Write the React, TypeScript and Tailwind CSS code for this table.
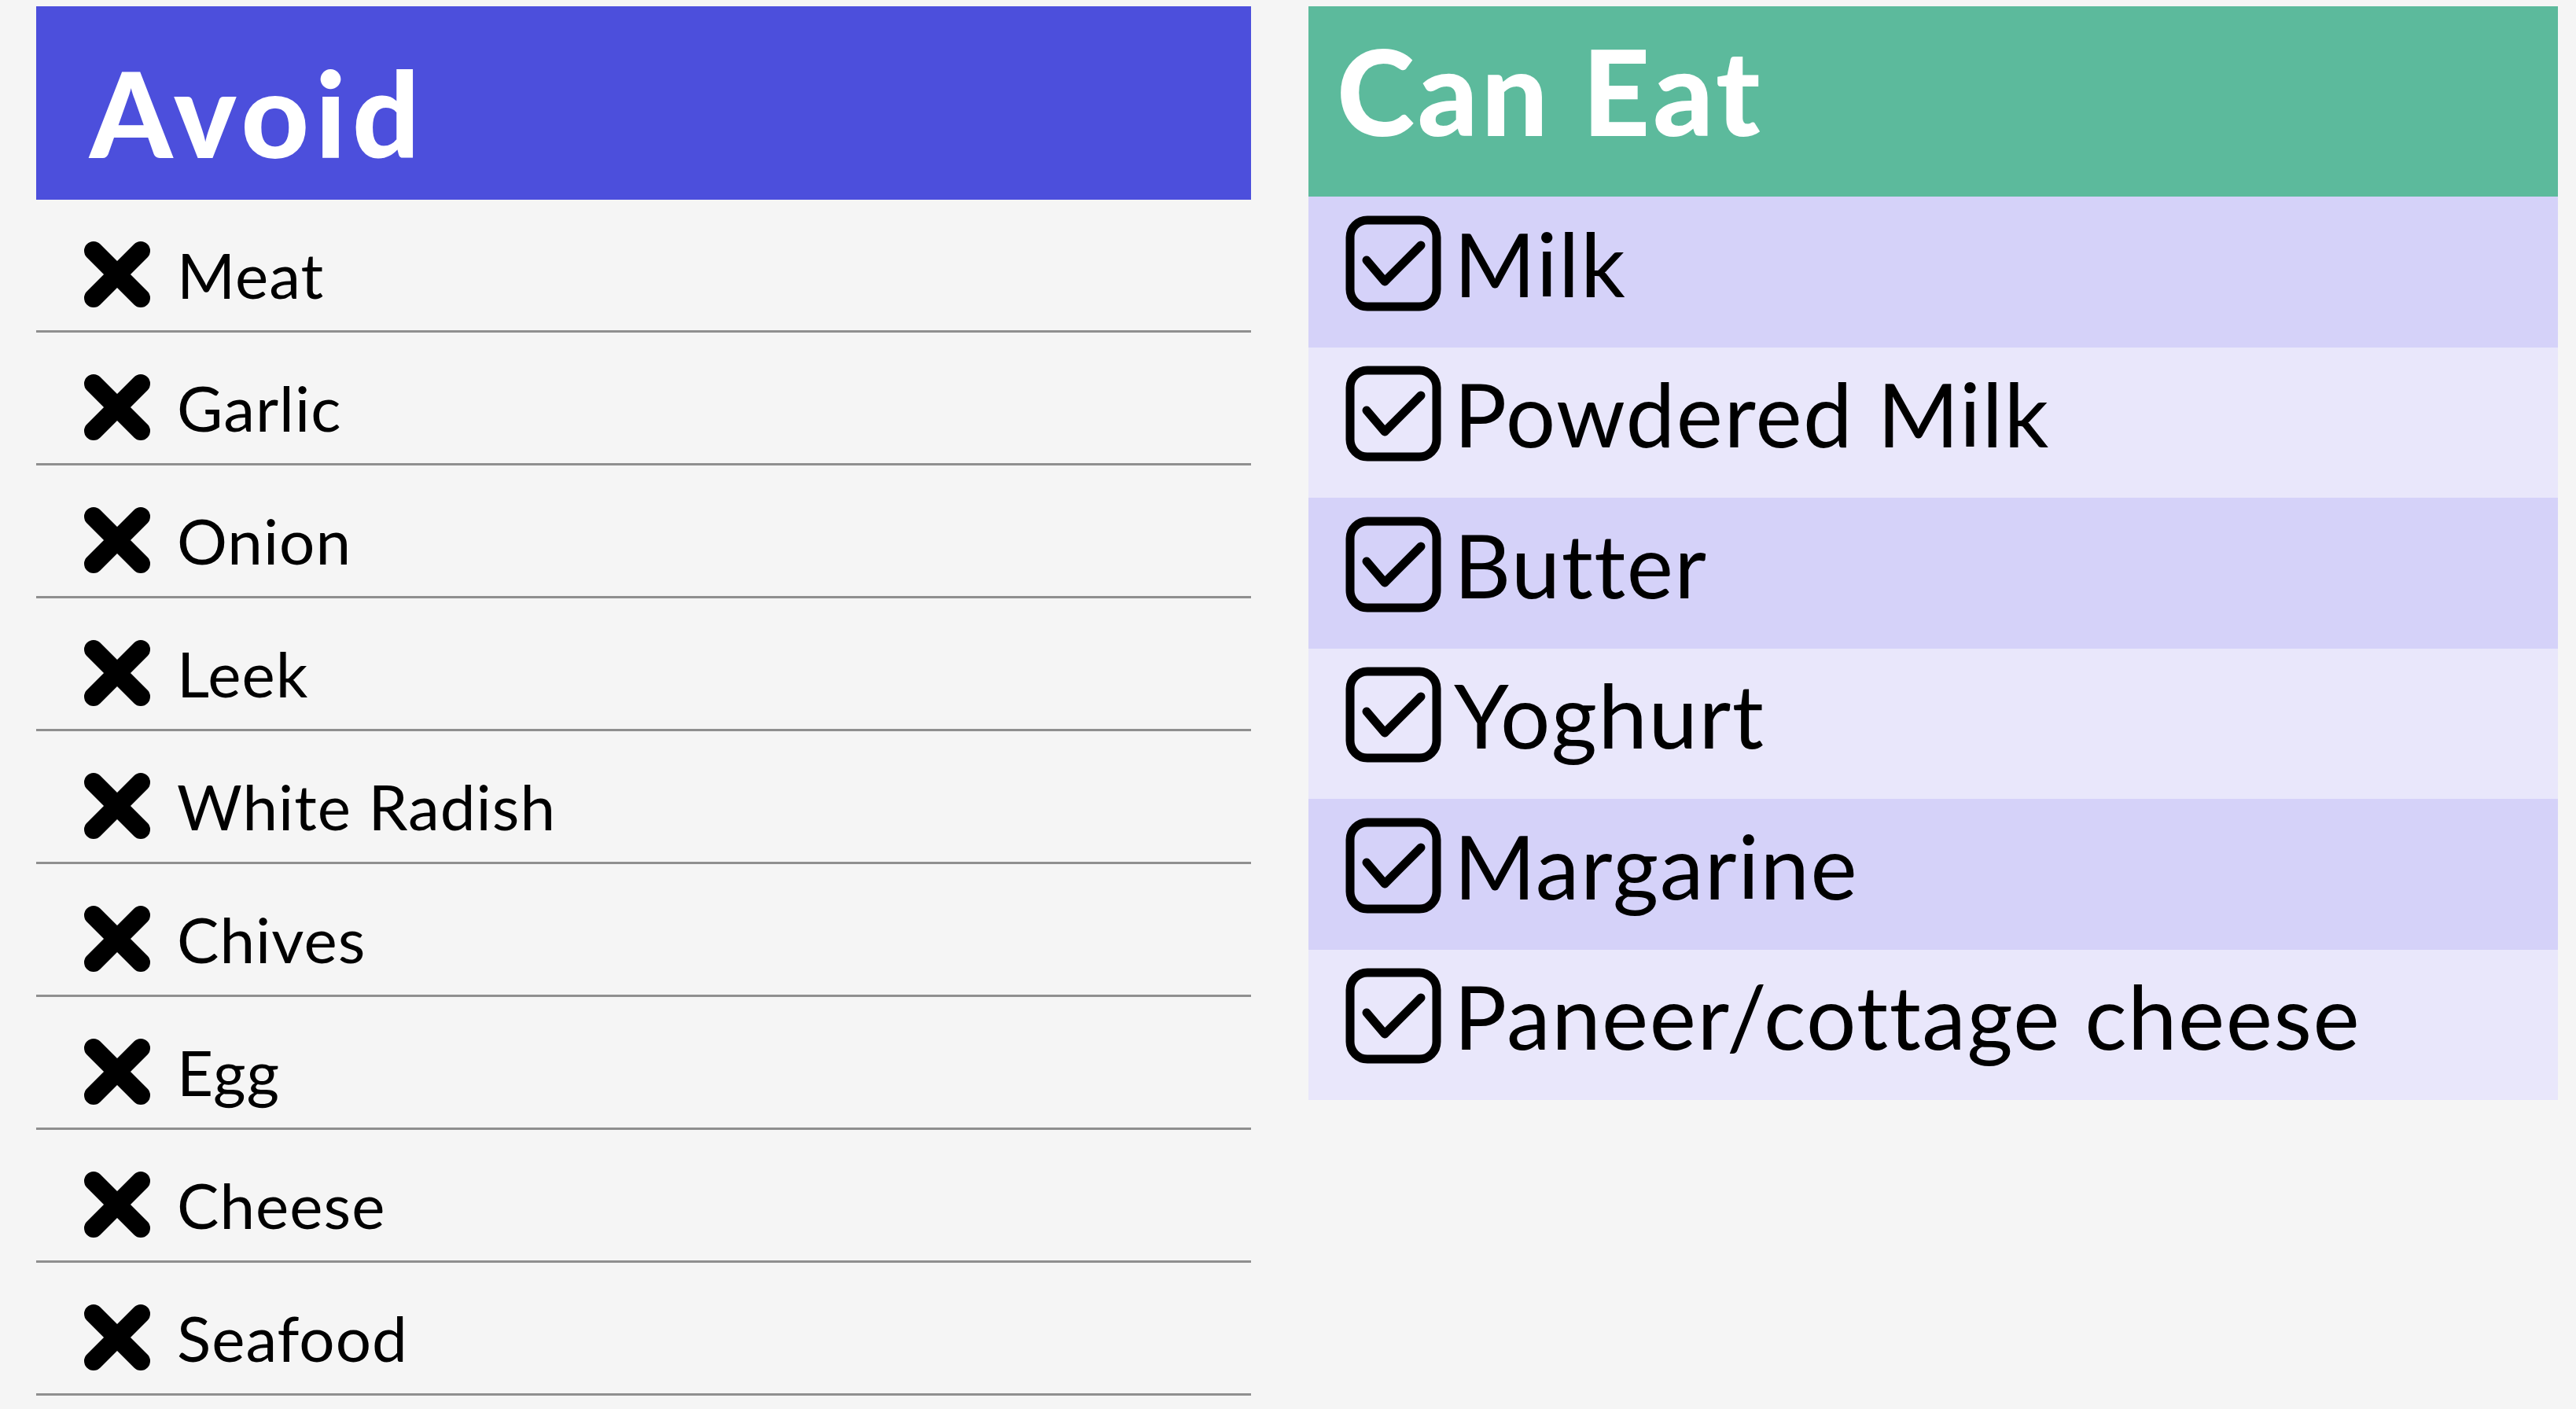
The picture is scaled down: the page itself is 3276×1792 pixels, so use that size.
import React from "react";

const avoid = ["Meat", "Garlic", "Onion", "Leek", "White Radish", "Chives", "Egg", "Cheese", "Seafood"];
const canEat = ["Milk", "Powdered Milk", "Butter", "Yoghurt", "Margarine", "Paneer/cottage cheese"];

function XIcon() {
  return (
    <svg width="84" height="84" viewBox="0 0 84 84" className="shrink-0">
      <path d="M12 12 L72 72 M72 12 L12 72" stroke="#000" strokeWidth="24" strokeLinecap="round" fill="none" />
    </svg>
  );
}

function CheckIcon() {
  return (
    <svg width="122" height="122" viewBox="0 0 122 122" className="shrink-0">
      <rect x="6" y="6" width="110" height="110" rx="22" ry="22" stroke="#000" strokeWidth="11" fill="none" />
      <path d="M27 57 L50 84 L96 38" stroke="#000" strokeWidth="11" strokeLinecap="round" strokeLinejoin="round" fill="none" />
    </svg>
  );
}

export default function App() {
  return (
    <div
      className="w-[3276px] h-[1792px] bg-[#f5f5f5] flex pt-[8px] pl-[46px] gap-[73px] overflow-hidden [font-variant-ligatures:none]"
      style={{ fontFamily: "Lato, 'Open Sans', sans-serif" }}
    >
      <div className="w-[1545px] flex flex-col">
        <div className="h-[246px] bg-[#4c4fdc] flex items-center pl-[68px] pt-[24px]">
          <span className="text-white text-[150px] font-black leading-none tracking-[8px]">Avoid</span>
        </div>
        {avoid.map((item) => (
          <div
            key={item}
            className="h-[169px] border-b-[3px] border-[#8f8f8f] flex items-center pl-[61px] pt-[24px] gap-[34px]"
          >
            <XIcon />
            <span className="text-[80px] text-black leading-none tracking-[1px]">{item}</span>
          </div>
        ))}
      </div>
      <div className="w-[1589px] flex flex-col">
        <div className="h-[242px] bg-[#5cba9c] flex items-center pl-[36px] pb-[28px]">
          <span className="text-white text-[150px] font-black leading-none tracking-[4px]">Can Eat</span>
        </div>
        {canEat.map((item, i) => (
          <div
            key={item}
            className={
              "h-[191.5px] flex items-center pl-[47px] pb-[22px] gap-[16px] " +
              (i % 2 === 0 ? "bg-[#d5d2f9]" : "bg-[#e9e7fb]")
            }
          >
            <CheckIcon />
            <span className="text-[112px] text-black leading-none tracking-[1.5px]">{item}</span>
          </div>
        ))}
      </div>
    </div>
  );
}
